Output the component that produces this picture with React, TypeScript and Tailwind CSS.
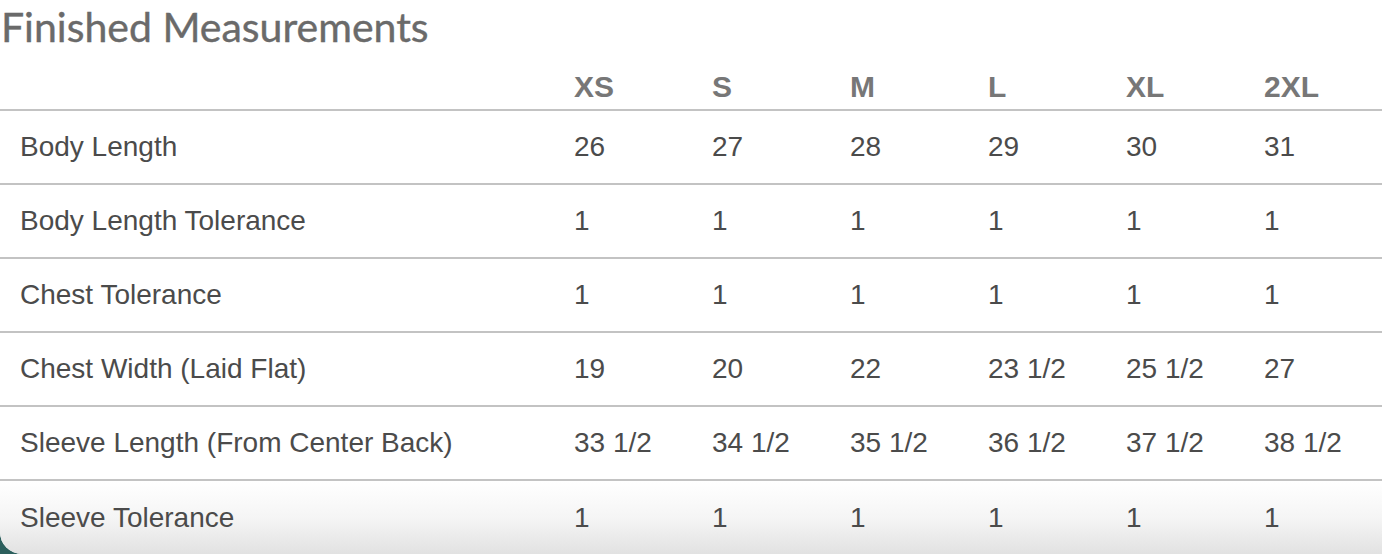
import React from 'react';

const sizes = ['XS', 'S', 'M', 'L', 'XL', '2XL'];

const rows: { label: string; values: string[] }[] = [
  { label: 'Body Length', values: ['26', '27', '28', '29', '30', '31'] },
  { label: 'Body Length Tolerance', values: ['1', '1', '1', '1', '1', '1'] },
  { label: 'Chest Tolerance', values: ['1', '1', '1', '1', '1', '1'] },
  { label: 'Chest Width (Laid Flat)', values: ['19', '20', '22', '23 1/2', '25 1/2', '27'] },
  { label: 'Sleeve Length (From Center Back)', values: ['33 1/2', '34 1/2', '35 1/2', '36 1/2', '37 1/2', '38 1/2'] },
  { label: 'Sleeve Tolerance', values: ['1', '1', '1', '1', '1', '1'] },
];

const cols = 'grid grid-cols-[554px_repeat(6,138px)]';

export default function App() {
  return (
    <div className="h-[554px] w-[1382px] overflow-hidden bg-[#2c5f5d]">
      <div className="flex h-full flex-col overflow-hidden rounded-bl-[22px] bg-white">
        {/* Title */}
        <h2 className="h-[63px] pl-[1px] font-['Lato',sans-serif] text-[41px] leading-[54px] text-[#6a6a6a] [-webkit-text-stroke:0.4px_#6a6a6a]">
          Finished Measurements
        </h2>

        {/* Header */}
        <div className={`${cols} h-[48px] items-center border-b-2 border-[#c3c3c3] font-['Liberation_Sans',Arial,sans-serif] text-[30px] font-bold text-[#777777]`}>
          <div />
          {sizes.map((s) => (
            <div key={s} className="pl-5">{s}</div>
          ))}
        </div>

        {/* Rows */}
        {rows.map((row, i) => {
          const last = i === rows.length - 1;
          return (
            <div
              key={row.label}
              className={
                last
                  ? `${cols} flex-1 items-center bg-gradient-to-b from-white via-[#f5f5f5] to-[#e2e2e2] font-['Liberation_Sans',Arial,sans-serif] text-[28px] text-[#4b4b4b]`
                  : `${cols} h-[74px] items-center border-b-2 border-[#c3c3c3] font-['Liberation_Sans',Arial,sans-serif] text-[28px] text-[#4b4b4b]`
              }
            >
              <div className="pl-5">{row.label}</div>
              {row.values.map((v, j) => (
                <div key={j} className="pl-5">{v}</div>
              ))}
            </div>
          );
        })}
      </div>
    </div>
  );
}
